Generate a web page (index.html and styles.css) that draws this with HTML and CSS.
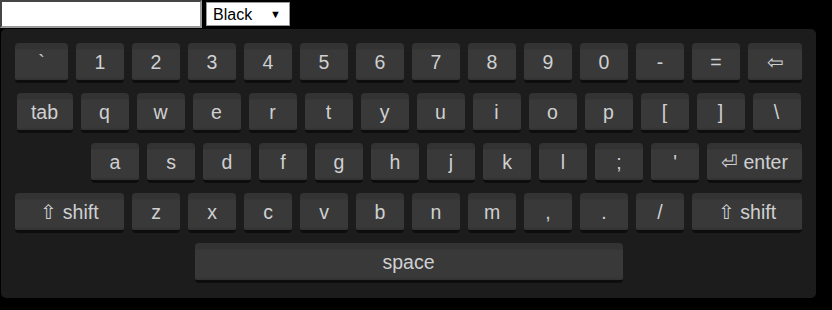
FILE: index.html
```html
<!DOCTYPE html>
<html>
<head>
  <title>Keyboard</title>
  <link rel="stylesheet" href="styles.css">
</head>
<body>
  <div class="toolbar">
    <input type="text" class="text-input">
    <span class="select-wrap">
      <select class="theme-select">
        <option>Black</option>
        <option>White</option>
      </select>
    </span>
  </div>

  <div class="keyboard">
    <div class="row">
      <div class="key wide-53">`</div>
      <div class="key">1</div>
      <div class="key">2</div>
      <div class="key">3</div>
      <div class="key">4</div>
      <div class="key">5</div>
      <div class="key">6</div>
      <div class="key">7</div>
      <div class="key">8</div>
      <div class="key">9</div>
      <div class="key">0</div>
      <div class="key">-</div>
      <div class="key">=</div>
      <div class="key wide-54">&#8678;</div>
    </div>
    <div class="row">
      <div class="key wide-56">tab</div>
      <div class="key">q</div>
      <div class="key">w</div>
      <div class="key">e</div>
      <div class="key">r</div>
      <div class="key">t</div>
      <div class="key">y</div>
      <div class="key">u</div>
      <div class="key">i</div>
      <div class="key">o</div>
      <div class="key">p</div>
      <div class="key">[</div>
      <div class="key">]</div>
      <div class="key">\</div>
    </div>
    <div class="row row-home">
      <div class="key">a</div>
      <div class="key">s</div>
      <div class="key">d</div>
      <div class="key">f</div>
      <div class="key">g</div>
      <div class="key">h</div>
      <div class="key">j</div>
      <div class="key">k</div>
      <div class="key">l</div>
      <div class="key">;</div>
      <div class="key">'</div>
      <div class="key wide-95">&#9166; enter</div>
    </div>
    <div class="row">
      <div class="key wide-109">&#8679; shift</div>
      <div class="key">z</div>
      <div class="key">x</div>
      <div class="key">c</div>
      <div class="key">v</div>
      <div class="key">b</div>
      <div class="key">n</div>
      <div class="key">m</div>
      <div class="key">,</div>
      <div class="key">.</div>
      <div class="key">/</div>
      <div class="key wide-110">&#8679; shift</div>
    </div>
    <div class="row">
      <div class="key space">space</div>
    </div>
  </div>
</body>
</html>
```

FILE: styles.css
```css
body {
  margin: 0;
  padding: 0;
  background: #000;
  font-family: "Liberation Sans", Arial, sans-serif;
}

.toolbar {
  display: flex;
  align-items: center;
  gap: 4px;
  height: 29px;
}

.text-input {
  box-sizing: border-box;
  width: 202px;
  height: 28px;
  margin: 0;
  border: 2px inset #999;
  background: #fff;
  font-size: 16px;
  align-self: flex-start;
}

/* custom arrow for the theme picker */
.select-wrap {
  position: relative;
  display: inline-block;
  margin-top: -1px;
}

.select-wrap::after {
  content: "\25BC";
  position: absolute;
  right: 9px;
  top: 6px;
  font-size: 11px;
  color: #000;
  pointer-events: none;
}

.theme-select {
  box-sizing: border-box;
  display: block;
  width: 84px;
  height: 24px;
  margin: 0;
  padding: 0 6px;
  border: 1px solid #999;
  border-radius: 0;
  background: #fff;
  color: #000;
  font-family: "Liberation Sans", Arial, sans-serif;
  font-size: 16px;
  -webkit-appearance: none;
  appearance: none;
}

.keyboard {
  box-sizing: border-box;
  width: 815px;
  height: 269px;
  margin-left: 1px;
  padding-top: 14px;
  background: #1c1c1c;
  border-radius: 5px;
  display: flex;
  flex-direction: column;
  gap: 10px;
}

.row {
  display: flex;
  justify-content: center;
  gap: 8px;
}

.row-home {
  padding-left: 76px;
}

.key {
  box-sizing: border-box;
  width: 48px;
  height: 40px;
  border-radius: 4px;
  background: linear-gradient(#333 0, #333 6px, #393939 7px, #393939 34px, #333 36px);
  border-bottom: 3px solid #0d0d0d;
  color: #cfd0d2;
  font-size: 19.5px;
  display: flex;
  align-items: center;
  justify-content: center;
  padding-top: 2px;
}

.wide-53 { width: 53px; }
.wide-54 { width: 54px; }
.wide-56 { width: 56px; }
.wide-95 { width: 95px; }
.wide-109 { width: 109px; }
.wide-110 { width: 110px; }

.space {
  width: 428px;
}
```
